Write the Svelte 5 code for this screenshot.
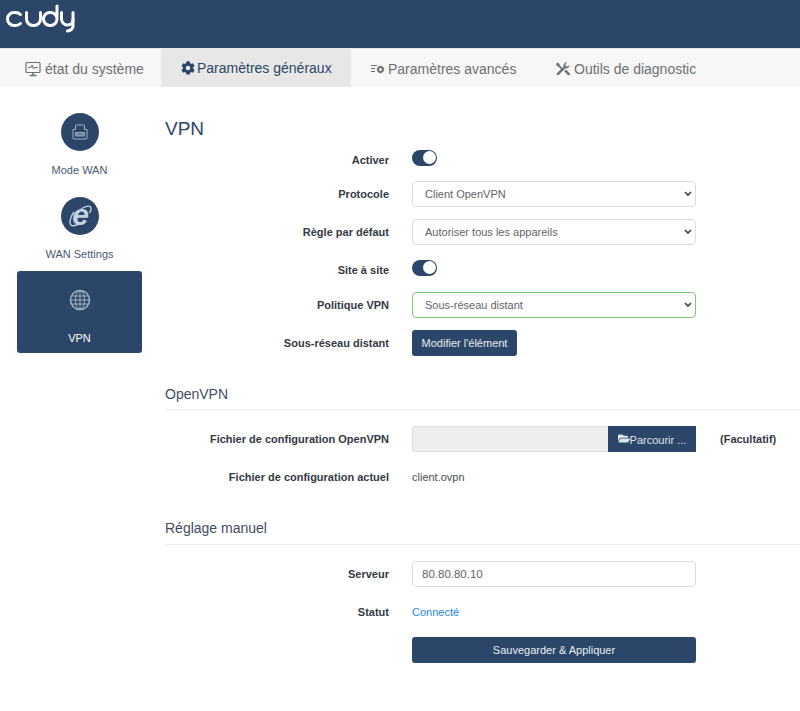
<script lang="ts">
  let activer = $state(true);
  let siteToSite = $state(true);

  const tabs = [
    { id: "status", label: "état du système" },
    { id: "general", label: "Paramètres généraux", active: true },
    { id: "advanced", label: "Paramètres avancés" },
    { id: "tools", label: "Outils de diagnostic" }
  ];
</script>

<header class="top">
  <svg class="logo" width="80" height="48" viewBox="0 0 80 48" fill="none" stroke="#fff" stroke-width="3" stroke-linecap="round" aria-label="cudy">
    <path d="M20.500 14.500a7.300 7.300 0 0 0-5-2h-1.500a6.500 6.500 0 0 0 0 13h1.500a7.300 7.300 0 0 0 5-2" />
    <path d="M26.500 12.500v6.500a6.500 6.500 0 0 0 6.500 6.500h1a6.500 6.500 0 0 0 6.500-6.500v-6.500" />
    <path d="M57 6v13a6.500 6.500 0 0 1-6.500 6.500h-.5a6.500 6.500 0 0 1 0-13h.5a6.500 6.500 0 0 1 6.500 6.500" />
    <path d="M61.500 12.500v6.500a6 6 0 0 0 6 6h0a5.500 5.500 0 0 0 5.500-5.500" />
    <path d="M73 12.500v13.500c0 2.800-2.200 4.500-5.500 5" />
  </svg>
</header>

<nav class="tabs">
  {#each tabs as tab}
    <div class="tab {tab.id}" class:active={tab.active}>
      {#if tab.id === "status"}
        <svg width="16" height="16" viewBox="0 0 16 16" fill="none" stroke="currentColor" stroke-width="1.200">
          <rect x="1" y="1.500" width="14" height="10" rx="1" />
          <path d="M3 6.500h3l1-2.500 1.500 4 1-1.500h3.500" stroke-width="1" />
          <path d="M8 11.500v2.500M4.500 14.500h7" stroke-width="1.500" />
        </svg>
      {:else if tab.id === "general"}
        <svg width="14" height="14" viewBox="0 0 512 512" fill="currentColor">
          <path d="M487 315l-42-25a192 192 0 0 0 0-68l42-25c5-3 7-9 6-14-11-36-30-68-55-95-4-4-10-5-15-2l-42 24a188 188 0 0 0-59-34V28c0-6-4-11-9-12-37-8-74-8-110 0-6 1-10 6-10 12v48a194 194 0 0 0-59 34L92 86c-5-3-11-2-15 2-25 27-44 59-55 95-2 5 1 11 6 14l42 25a192 192 0 0 0 0 68l-42 25c-5 3-7 9-6 14 11 36 30 68 55 95 4 4 10 5 15 2l42-24c17 15 37 26 59 34v48c0 6 4 11 10 12 37 8 74 8 110 0 5-1 9-6 9-12v-48c22-8 42-19 59-34l42 24c5 3 11 2 15-2 25-27 44-59 55-95 1-5-1-11-6-14zM256 336a80 80 0 1 1 0-160 80 80 0 0 1 0 160z" />
        </svg>
      {:else if tab.id === "advanced"}
        <svg width="14" height="12" viewBox="0 0 14 12" fill="none" stroke="currentColor">
          <path d="M0 2.500h6M0 5.500h4M0 8.500h4" />
          <circle cx="9.500" cy="6.500" r="2.500" stroke-width="1.800" />
          <path d="M9.500 2.800v1M9.500 9.200v1M5.800 6.500h1M12.200 6.500h1" stroke-width="1.500" />
        </svg>
      {:else}
        <svg width="14" height="14" viewBox="0 0 14 14" fill="currentColor">
          <path d="M1.500 0.500L3.500 2l.3 1.500L8 7.800 6.800 9 2.600 4.700 1.200 4.300 0 2z" />
          <path d="M13.700 3a3.500 3.500 0 0 1-4.500 3.300L2.700 13a1.300 1.300 0 0 1-1.800-1.800l6.700-6.500A3.500 3.500 0 0 1 11.200.2L9.300 2.200l.4 2 2 .4z" />
          <path d="M8.300 9.300l1.700-1.700 3.500 3.600a1.200 1.200 0 0 1-1.700 1.700z" />
        </svg>
      {/if}
      <span>{tab.label}</span>
    </div>
  {/each}
</nav>

<div class="page">
  <aside class="side">
    <div class="side-item">
      <div class="disc">
        <svg width="16" height="16" viewBox="0 0 16 16" fill="none" stroke="#a3b3c8" stroke-width="1">
          <path d="M1 5.500h2.500V2a1 1 0 0 1 1-1h7a1 1 0 0 1 1 1v3.500H15V14a1 1 0 0 1-1 1H2a1 1 0 0 1-1-1z" />
          <rect x="3.500" y="8.500" width="9" height="3.500" fill="#6f85a2" stroke-width=".8" />
        </svg>
      </div>
      <span>Mode WAN</span>
    </div>
    <div class="side-item">
      <div class="disc">
        <svg class="ie-icon" width="30" height="30" viewBox="0 0 30 30" fill="none">
          <path d="M9 11C5 16 4 22 6 24c2 1.500 5 .5 8-1" stroke="#c3d0e0" stroke-width="1.400" />
          <path d="M16 8c4-2.500 8-3.500 9.500-2 1 1 .5 3.500-1 6" stroke="#c3d0e0" stroke-width="1.400" />
          <text x="15.500" y="24" text-anchor="middle" class="ie">e</text>
        </svg>
      </div>
      <span>WAN Settings</span>
    </div>
    <div class="side-item current">
      <div class="disc">
        <svg width="22" height="22" viewBox="0 0 22 22" fill="none" stroke="#a3b3c8" stroke-width="1">
          <circle cx="11" cy="11" r="9.500" stroke-width="1.500" />
          <ellipse cx="11" cy="11" rx="4.500" ry="9.500" />
          <path d="M11 1.500v19M2.500 7h17M1.500 11h19M2.500 15h17" />
        </svg>
      </div>
      <span>VPN</span>
    </div>
  </aside>

  <main class="content">
    <h1>VPN</h1>

    <div class="row first">
      <div class="label">Activer</div>
      <button class="toggle" class:on={activer} aria-label="Activer" onclick={() => (activer = !activer)}></button>
    </div>
    <div class="row">
      <div class="label">Protocole</div>
      <select><option>Client OpenVPN</option></select>
    </div>
    <div class="row">
      <div class="label">Règle par défaut</div>
      <select><option>Autoriser tous les appareils</option></select>
    </div>
    <div class="row switch">
      <div class="label">Site à site</div>
      <button class="toggle" class:on={siteToSite} aria-label="Site à site" onclick={() => (siteToSite = !siteToSite)}></button>
    </div>
    <div class="row">
      <div class="label">Politique VPN</div>
      <select class="valid"><option>Sous-réseau distant</option></select>
    </div>
    <div class="row">
      <div class="label">Sous-réseau distant</div>
      <div><button class="btn edit">Modifier l'élément</button></div>
    </div>

    <h2>OpenVPN</h2>

    <div class="row">
      <div class="label">Fichier de configuration OpenVPN</div>
      <div class="file">
        <div class="file-name"></div>
        <button class="file-btn">
          <svg width="12" height="11" viewBox="0 0 576 512" fill="currentColor">
            <path d="M572 292l-72 123a64 64 0 0 1-55 32H48a24 24 0 0 1-21-36l72-123a64 64 0 0 1 55-32h397a24 24 0 0 1 21 36zM152 224h328v-48a48 48 0 0 0-48-48H272l-64-64H48a48 48 0 0 0-48 48v278l69-119c17-29 49-47 83-47z" />
          </svg>Parcourir ...
        </button>
      </div>
      <div class="note">(Facultatif)</div>
    </div>
    <div class="row">
      <div class="label">Fichier de configuration actuel</div>
      <div class="value">client.ovpn</div>
    </div>

    <h2 class="manual">Réglage manuel</h2>

    <div class="row">
      <div class="label">Serveur</div>
      <input type="text" value="80.80.80.10" />
    </div>
    <div class="row">
      <div class="label">Statut</div>
      <div class="value link">Connecté</div>
    </div>
    <div class="row">
      <div></div>
      <button class="btn save">Sauvegarder &amp; Appliquer</button>
    </div>
  </main>
</div>

<style>
  :global(body) {
    margin: 0;
    background: #fff;
    font-family: "Liberation Sans", Arial, sans-serif;
    color: #495057;
    overflow: hidden;
  }

  .top {
    height: 48px;
    background: #2c4669;
    overflow: hidden;
  }

  .logo {
    display: block;
  }

  .tabs {
    display: flex;
    height: 39px;
    background: #f7f7f7;
    border-top: 1px solid #e8e8e8;
    box-sizing: border-box;
  }

  .tab {
    display: flex;
    align-items: center;
    gap: 4px;
    font-size: 14px;
    color: #6c6f73;
    box-sizing: border-box;
    padding-top: 2px;
  }

  .tab.status {
    width: 161px;
    padding-left: 25px;
  }

  .tab.general {
    width: 190px;
    padding-left: 20px;
    padding-top: 0;
    gap: 2px;
  }

  .tab.advanced {
    width: 186px;
    padding-left: 20px;
    gap: 3px;
  }

  .tab.tools {
    padding-left: 19px;
  }

  .tab.active {
    background: #e7e7e7;
    color: #2c4669;
  }

  .page {
    display: flex;
  }

  .side {
    width: 125px;
    margin-left: 17px;
    padding-top: 18px;
    flex: none;
  }

  .side-item {
    height: 82px;
    margin-bottom: 2px;
    display: flex;
    flex-direction: column;
    align-items: center;
    font-size: 11px;
    color: #495a73;
    border-radius: 3px;
    box-sizing: border-box;
    padding-top: 8px;
  }

  .side-item span {
    margin-top: 13px;
  }

  .disc {
    width: 38px;
    height: 38px;
    border-radius: 50%;
    background: #2c4669;
    display: flex;
    align-items: center;
    justify-content: center;
  }

  .side-item.current {
    background: #2c4669;
    color: #fff;
    margin-top: -2px;
    padding-top: 10px;
  }

  .ie-icon {
    overflow: visible;
  }

  .ie {
    font: italic bold 30px "Liberation Sans", sans-serif;
    fill: #c3d0e0;
  }

  .content {
    flex: 1;
    margin-left: 23px;
    min-width: 0;
  }

  h1 {
    margin: 31px 0 0;
    font-size: 19px;
    line-height: 21px;
    font-weight: 400;
    color: #2c4669;
  }

  h2 {
    margin: 30px 0 16px;
    padding-bottom: 7px;
    border-bottom: 1px solid #ececec;
    font-size: 14px;
    line-height: 16px;
    font-weight: 400;
    color: #3f4d5f;
  }

  h2.manual {
    padding-bottom: 8px;
  }

  .row {
    display: grid;
    grid-template-columns: 224px 284px auto;
    column-gap: 23px;
    align-items: center;
    height: 26px;
    margin-bottom: 12px;
  }

  .row.first {
    margin-top: 8px;
    margin-bottom: 8px;
  }

  .row.switch {
    margin-bottom: 9px;
  }

  .label {
    text-align: right;
    font-size: 11px;
    font-weight: 700;
    color: #333a44;
  }

  select,
  input {
    width: 284px;
    height: 26px;
    box-sizing: border-box;
    border: 1px solid #dcdcdc;
    border-radius: 4px;
    background-color: #fff;
    font: 11px "Liberation Sans", Arial, sans-serif;
    color: #5f6368;
    padding: 0 0 0 12px;
  }

  select {
    appearance: none;
    background-image: url("data:image/svg+xml,%3Csvg xmlns='http://www.w3.org/2000/svg' width='8' height='6' fill='none' stroke='%23444' stroke-width='1.700'%3E%3Cpath d='M1 1l3 3 3-3'/%3E%3C/svg%3E");
    background-repeat: no-repeat;
    background-position: right 3px center;
  }

  input {
    font-size: 11.500px;
    padding-left: 9px;
  }

  select.valid {
    border-color: #86c47a;
  }

  .toggle {
    width: 25px;
    height: 16px;
    margin-bottom: 5px;
    padding: 0;
    border: none;
    border-radius: 8px;
    background: #2c4669;
    position: relative;
    cursor: pointer;
  }

  .toggle::after {
    content: "";
    position: absolute;
    top: 1.500px;
    left: 1.500px;
    width: 13px;
    height: 13px;
    border-radius: 50%;
    background: #fff;
  }

  .toggle.on::after {
    left: 10.500px;
  }

  .btn {
    height: 26px;
    border: none;
    border-radius: 3px;
    background: #2c4669;
    color: #e9edf2;
    font: 11px "Liberation Sans", Arial, sans-serif;
    white-space: nowrap;
    cursor: pointer;
  }

  .edit {
    width: 105px;
    display: block;
  }

  .save {
    width: 284px;
  }

  .file {
    display: flex;
    height: 26px;
    width: 284px;
  }

  .file-name {
    flex: 1;
    background: #eee;
    border: 1px solid #dedede;
    border-right: none;
    border-radius: 3px 0 0 3px;
  }

  .file-btn {
    width: 88px;
    border: none;
    background: #2c4669;
    color: #dfe5ec;
    font: 11px "Liberation Sans", Arial, sans-serif;
    padding: 0;
    cursor: pointer;
  }

  .note {
    margin-left: 1px;
    font-size: 11px;
    font-weight: 700;
    color: #333a44;
  }

  .value {
    font-size: 11px;
    color: #4a4f55;
  }

  .link {
    color: #1f86e6;
  }
</style>
